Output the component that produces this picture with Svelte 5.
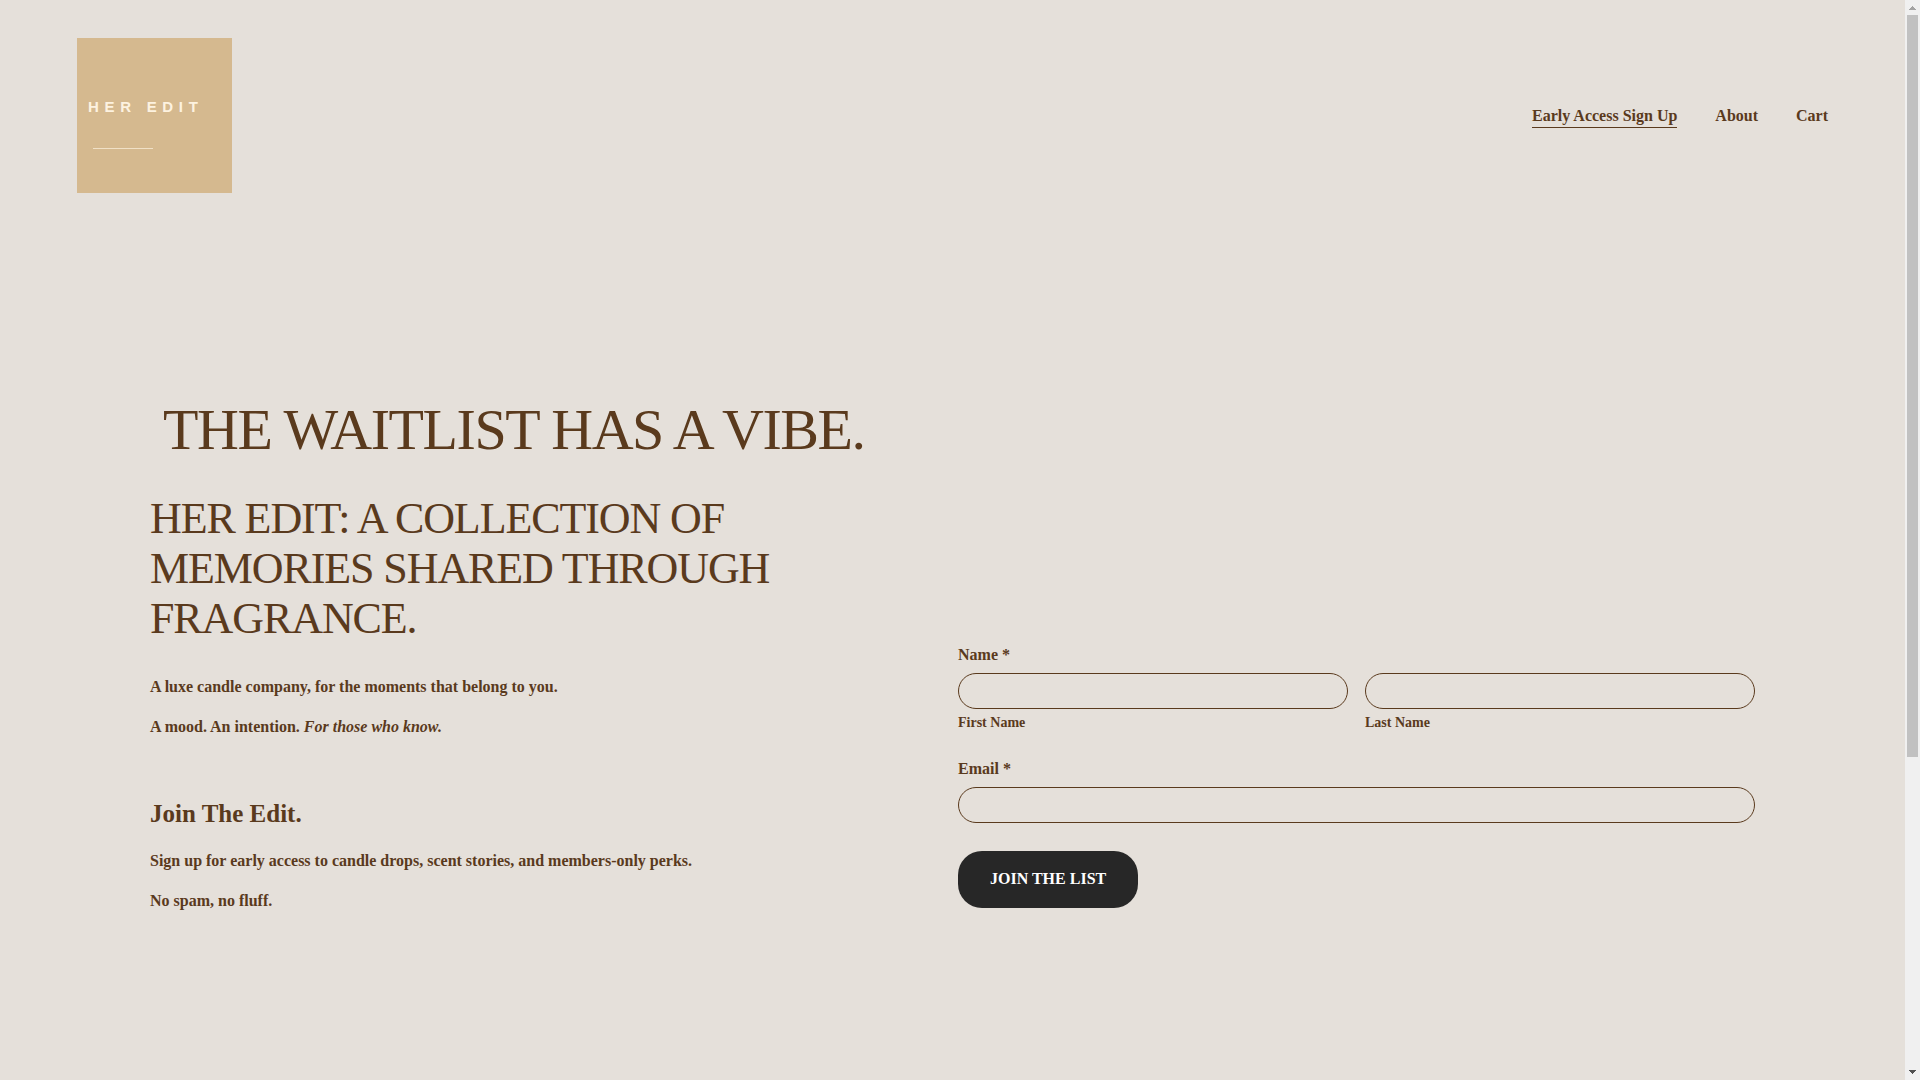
<script>
  const links = [
    { label: 'Early Access Sign Up', href: '#early-access', active: true },
    { label: 'About', href: '#about', active: false },
    { label: 'Cart', href: '#cart', active: false }
  ];

  let firstName = $state('');
  let lastName = $state('');
  let email = $state('');
</script>

<div class="viewport">
  <div class="page">
    <header>
      <a class="logo" href="#home">
        <span class="logo-name">HER EDIT</span>
        <span class="logo-rule"></span>
      </a>
      <nav aria-label="Main">
        {#each links as link}
          <a href={link.href} class:active={link.active}>{link.label}</a>
        {/each}
      </nav>
    </header>

    <main>
      <section class="copy">
        <h1>{' THE WAITLIST HAS A VIBE.'}</h1>
        <h2>HER EDIT: A COLLECTION OF MEMORIES SHARED THROUGH FRAGRANCE.</h2>
        <p>A luxe candle company, for the moments that belong to you.</p>
        <p>A mood. An intention. <em>For those who know.</em></p>
        <h3>Join The Edit.</h3>
        <p>Sign up for early access to candle drops, scent stories, and members-only perks.</p>
        <p>No spam, no fluff.</p>
      </section>

      <form onsubmit={(e) => e.preventDefault()}>
        <fieldset>
          <legend>Name *</legend>
          <div class="names">
            <div class="field">
              <input id="first" type="text" bind:value={firstName} />
              <label class="caption" for="first">First Name</label>
            </div>
            <div class="field">
              <input id="last" type="text" bind:value={lastName} />
              <label class="caption" for="last">Last Name</label>
            </div>
          </div>
        </fieldset>
        <div class="email">
          <label for="email">Email *</label>
          <input id="email" type="email" bind:value={email} />
        </div>
        <button type="submit">JOIN THE LIST</button>
      </form>
    </main>
  </div>

  <div class="scrollbar" aria-hidden="true">
    <svg width="15" height="15" viewBox="0 0 15 15" shape-rendering="crispEdges">
      <path fill="#a3a3a3" d="M7 6h1v1h1v1h1v1h1v1H4V9h1V8h1V7h1z" />
    </svg>
    <div class="track"><div class="thumb"></div></div>
    <svg width="15" height="15" viewBox="0 0 15 15" shape-rendering="crispEdges">
      <path fill="#505050" d="M4 5h7v1h-1v1H9v1H8v1H7V8H6V7H5V6H4z" />
    </svg>
  </div>
</div>

<style>
  :global(body) {
    margin: 0;
    background: #e5e0da;
  }

  .viewport {
    display: grid;
    grid-template-columns: minmax(0, 1fr) 15px;
    height: 100vh;
    overflow: hidden;
    background: #e5e0da;
    color: #5a3a1d;
    font: bold 16px/24px 'Liberation Serif', 'Times New Roman', serif;
  }

  .page {
    overflow: hidden;
  }

  header {
    display: flex;
    align-items: center;
    justify-content: space-between;
    padding: 38px 77px;
  }

  .logo {
    box-sizing: border-box;
    display: flex;
    flex-direction: column;
    gap: 32px;
    width: 155px;
    height: 155px;
    padding: 60px 11px 0;
    background: #d5b98f;
    color: #fdf2e0;
    text-decoration: none;
  }

  .logo-name {
    font: bold 15px/18px 'Liberation Sans', Arial, sans-serif;
    letter-spacing: 0.38em;
    white-space: nowrap;
  }

  .logo-rule {
    width: 60px;
    height: 1px;
    margin-left: 5px;
    background: #f0e0c6;
  }

  nav {
    display: flex;
    gap: 38px;
  }

  nav a {
    padding-top: 2px;
    border-bottom: 1px solid transparent;
    color: inherit;
    line-height: 22px;
    text-decoration: none;
  }

  nav a.active {
    border-color: currentColor;
  }

  main {
    display: grid;
    grid-template-columns: repeat(2, minmax(0, 1fr));
    column-gap: 11px;
    align-items: end;
    padding: 165px 150px;
  }

  h1,
  h2,
  h3,
  p {
    margin: 0;
  }

  h1,
  h2 {
    font-weight: normal;
    letter-spacing: -0.025em;
    white-space: pre-wrap;
  }

  h1 {
    margin-bottom: 30px;
    font-size: 58px;
    line-height: 68px;
  }

  h2 {
    margin-bottom: 31px;
    font-size: 44px;
    line-height: 50px;
  }

  h3 {
    margin: 59px 0 19px;
    font-size: 25px;
    line-height: 32px;
  }

  p + p {
    margin-top: 16px;
  }

  form {
    padding-bottom: 5px;
  }

  fieldset {
    min-width: 0;
    margin: 0;
    padding: 0;
    border: 0;
  }

  legend {
    padding: 0 0 6px;
  }

  .names {
    display: grid;
    grid-template-columns: repeat(2, minmax(0, 1fr));
    gap: 17px;
  }

  .field,
  .email {
    display: flex;
    flex-direction: column;
  }

  .field {
    gap: 4px;
  }

  .email {
    gap: 6px;
    margin: 24px 0 28px;
  }

  .caption {
    font-size: 14px;
    line-height: 20px;
  }

  input {
    box-sizing: border-box;
    width: 100%;
    height: 36px;
    padding: 0 16px;
    border: 1px solid #5a3a1d;
    border-radius: 18px;
    background: transparent;
    color: inherit;
    font: inherit;
  }

  button {
    display: block;
    padding: 16px 32px 17px;
    border: 0;
    border-radius: 24px;
    background: #272727;
    color: #fff;
    font: inherit;
    cursor: pointer;
  }

  .scrollbar {
    display: flex;
    flex-direction: column;
    background: #f0f0f0;
  }

  .scrollbar svg {
    display: block;
  }

  .track {
    flex: 1;
    padding: 0 2px;
  }

  .thumb {
    height: 70.7%;
    background: #c1c1c1;
  }
</style>
